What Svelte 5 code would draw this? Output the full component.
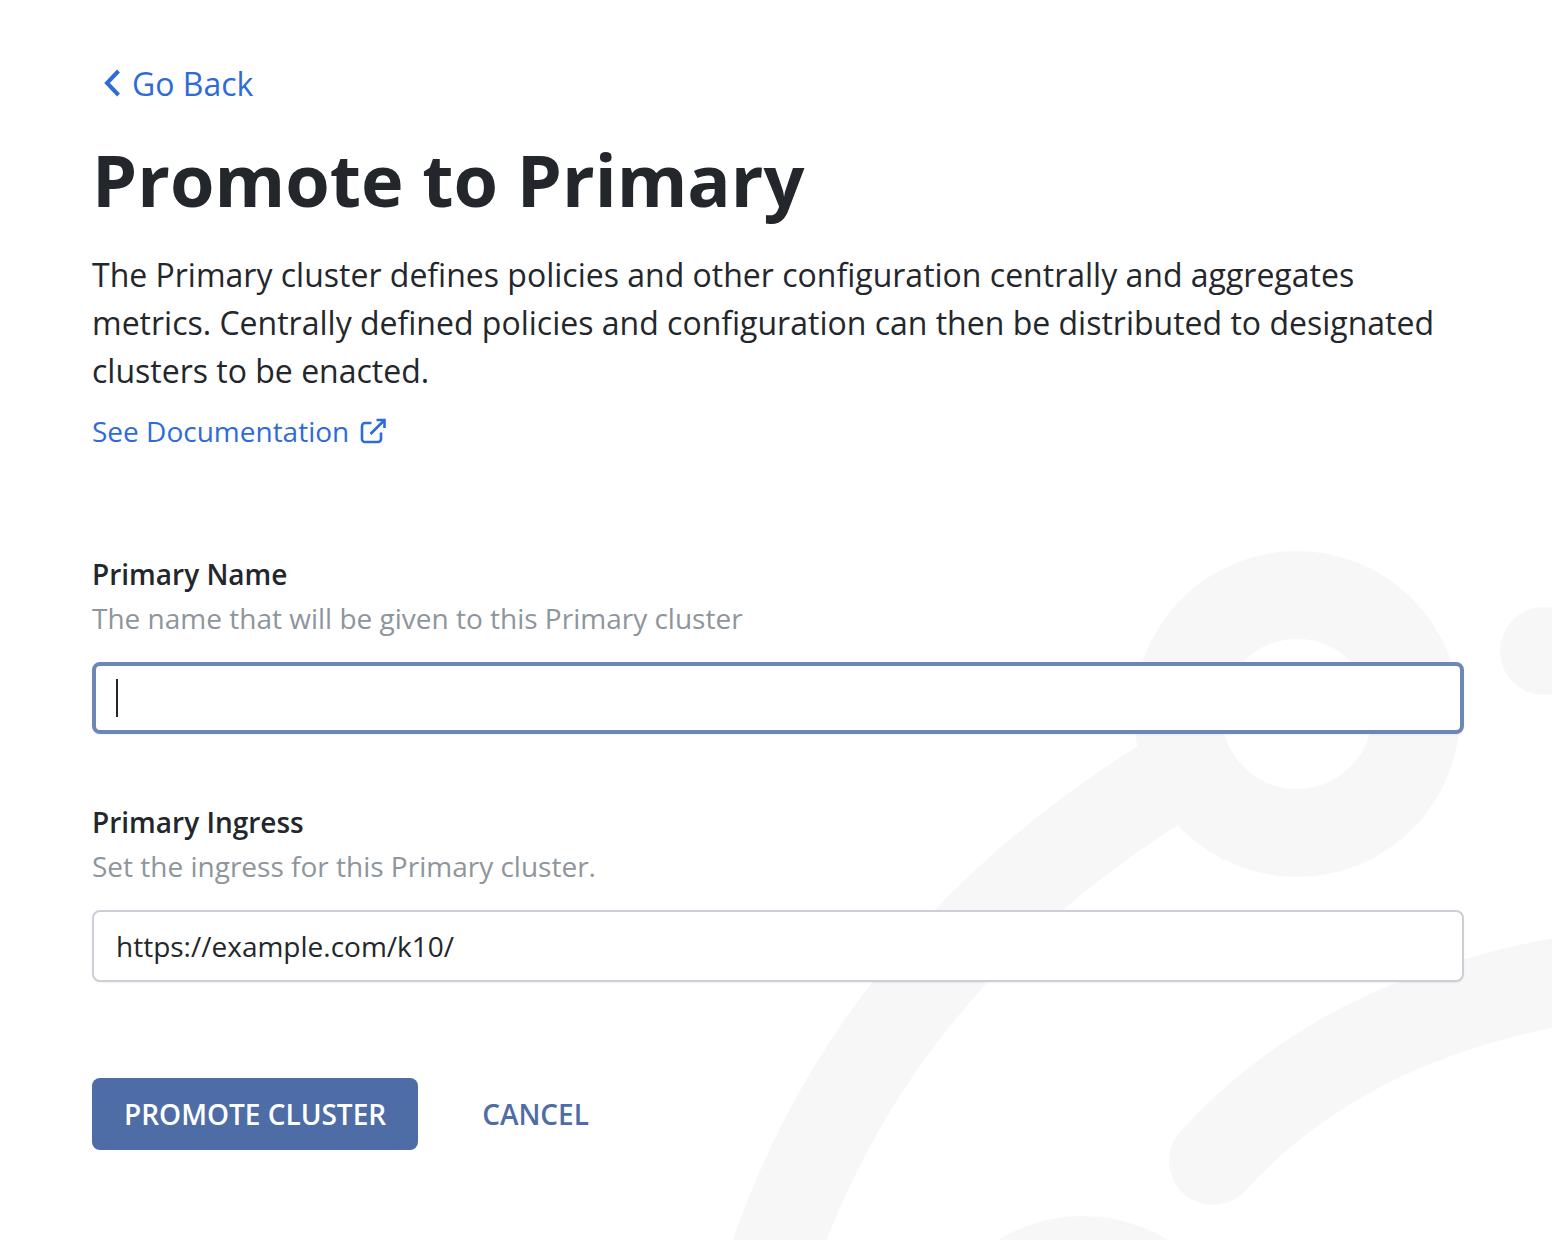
<script>
  let name = $state('');
  let ingress = $state('https://example.com/k10/');
</script>

<div class="page">
  <svg class="backdrop" width="1552" height="1240" viewBox="0 0 1552 1240" aria-hidden="true">
    <circle cx="1297" cy="714" r="119" />
    <circle cx="1544" cy="651" r="44" class="solid" />
    <circle cx="1083" cy="1379" r="119" />
    <path d="M1157 786 C990 892 850 1040 776 1250" />
    <path d="M1213 1161 C1300 1065 1420 1005 1570 980" />
  </svg>

  <main class="content">
    <a class="back" href="#back">
      <svg width="18" height="28" viewBox="0 0 18 28" aria-hidden="true">
        <path d="M15.5 2 L4 14 L15.5 26" />
      </svg>
      Go Back
    </a>

    <h1>Promote to Primary</h1>

    <p class="intro">
      The Primary cluster defines policies and other configuration centrally and aggregates
      metrics. Centrally defined policies and configuration can then be distributed to designated
      clusters to be enacted.
    </p>

    <a class="docs" href="#docs">
      See Documentation
      <svg width="26" height="26" viewBox="0 0 26 26" aria-hidden="true">
        <path d="M21 14.5 V21 A3 3 0 0 1 18 24 H5 A3 3 0 0 1 2 21 V8 A3 3 0 0 1 5 5 H11.5" />
        <path d="M16.5 2 H24.5 V10 M24.5 2 L10.5 16" />
      </svg>
    </a>

    <form on:submit|preventDefault>
      <div class="field first">
        <label for="primary-name">Primary Name</label>
        <p class="hint">The name that will be given to this Primary cluster</p>
        <div class="input-wrap">
          <input id="primary-name" class="focused" type="text" bind:value={name} />
          <span class="caret"></span>
        </div>
      </div>

      <div class="field">
        <label for="primary-ingress">Primary Ingress</label>
        <p class="hint">Set the ingress for this Primary cluster.</p>
        <div class="input-wrap">
          <input id="primary-ingress" type="text" bind:value={ingress} />
        </div>
      </div>

      <div class="actions">
        <button type="submit" class="btn btn-primary">PROMOTE CLUSTER</button>
        <button type="button" class="btn btn-text">CANCEL</button>
      </div>
    </form>
  </main>
</div>

<style>
  :global(body) {
    margin: 0;
    background: #fff;
  }

  .page {
    position: relative;
    height: 1240px;
    overflow: hidden;
    font-family: "Open Sans", "Noto Sans", sans-serif;
    color: #23272b;
  }

  .backdrop {
    position: absolute;
    top: 0;
    left: 0;
  }

  .backdrop circle,
  .backdrop path {
    fill: none;
    stroke: #f7f7f7;
    stroke-width: 88;
    stroke-linecap: round;
  }

  .backdrop .solid {
    fill: #f7f7f7;
    stroke: none;
  }

  .content {
    position: relative;
    padding: 59px 88px 0 92px;
  }

  .back {
    display: flex;
    align-items: center;
    gap: 12px;
    height: 48px;
    padding-left: 10px;
    font-size: 32px;
    color: #2f6bd8;
    text-decoration: none;
  }

  .back svg {
    margin-left: 1px;
    margin-right: -1px;
  }

  .back svg path {
    fill: none;
    stroke: currentColor;
    stroke-width: 4;
  }

  h1 {
    margin: 23px 0 0;
    font-size: 72px;
    line-height: 98px;
    font-weight: 700;
  }

  .intro {
    margin: 23px 0 0;
    font-size: 32px;
    line-height: 48px;
  }

  .docs {
    display: flex;
    align-items: center;
    gap: 11px;
    margin-top: 12px;
    height: 48px;
    font-size: 28px;
    color: #2f6bd8;
    text-decoration: none;
  }

  .docs svg path {
    fill: none;
    stroke: currentColor;
    stroke-width: 2.6;
  }

  .field {
    margin-top: 66px;
  }

  .field.first {
    margin-top: 97px;
  }

  label {
    display: block;
    font-size: 28px;
    line-height: 44px;
    font-weight: 600;
  }

  .hint {
    margin: 0;
    font-size: 28px;
    line-height: 44px;
    color: #8e959c;
  }

  .input-wrap {
    position: relative;
    margin-top: 22px;
  }

  input {
    display: block;
    box-sizing: border-box;
    width: 100%;
    height: 72px;
    padding: 0 22px;
    border: 2px solid #ccd0d6;
    border-radius: 8px;
    background: #fff;
    font: 28px "Open Sans", "Noto Sans", sans-serif;
    color: #23272b;
    outline: none;
    box-shadow: 0 1px 2px rgba(0, 0, 0, 0.06);
  }

  input.focused {
    border: 4px solid #6d87b5;
    caret-color: transparent;
  }

  .caret {
    position: absolute;
    left: 24px;
    top: 17px;
    width: 2px;
    height: 38px;
    background: #23272b;
  }

  .actions {
    display: flex;
    align-items: center;
    gap: 32px;
    margin-top: 96px;
  }

  .btn {
    height: 72px;
    padding: 0 32px;
    border: none;
    border-radius: 8px;
    font: 600 28px "Open Sans", "Noto Sans", sans-serif;
    cursor: pointer;
  }

  .btn-primary {
    background: #4e6ca6;
    color: #fff;
  }

  .btn-text {
    background: none;
    color: #4e6ca6;
  }
</style>
